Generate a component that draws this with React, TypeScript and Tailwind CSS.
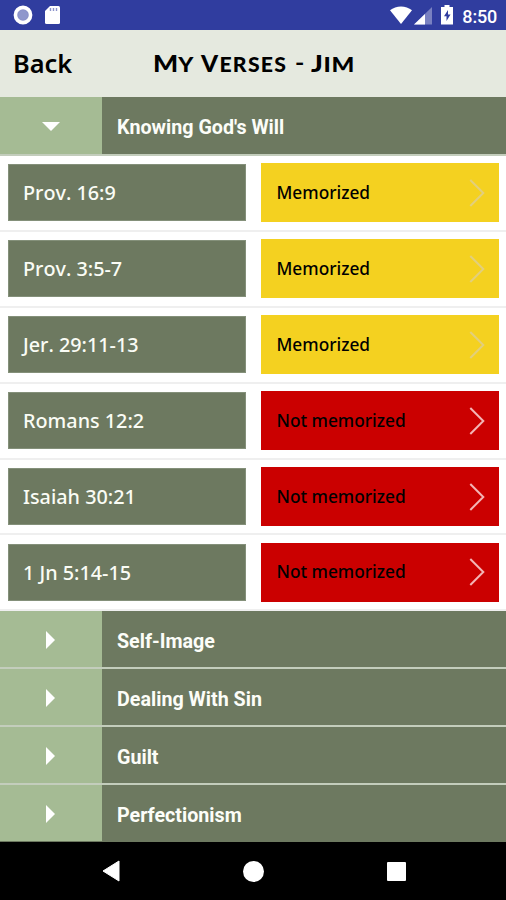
import { useState } from "react";

type Verse = { reference: string; memorized: boolean };

const verses: Verse[] = [
    { reference: "Prov. 16:9", memorized: true },
    { reference: "Prov. 3:5-7", memorized: true },
    { reference: "Jer. 29:11-13", memorized: true },
    { reference: "Romans 12:2", memorized: false },
    { reference: "Isaiah 30:21", memorized: false },
    { reference: "1 Jn 5:14-15", memorized: false },
];

const categories = [
    { name: "Knowing God's Will", verses },
    { name: "Self-Image", verses: [] },
    { name: "Dealing With Sin", verses: [] },
    { name: "Guilt", verses: [] },
    { name: "Perfectionism", verses: [] },
];

const StatusBar = () => (
    <div className="h-[30px] shrink-0 bg-[#303d9f] flex items-center justify-between pl-[13px] pr-[9px] text-white">
        <div className="flex items-center gap-[11px]">
            <svg width="20" height="20" viewBox="0 0 20 20">
                <circle cx="10" cy="10" r="7.6" fill="#8b93ca" stroke="#fff" strokeWidth="3.6" />
                <circle cx="10" cy="10" r="4.5" fill="#8f97cc" />
            </svg>
            <svg width="17" height="20" viewBox="0 0 17 20">
                <path d="M6 1h8.500a1.500 1.500 0 0 1 1.500 1.500v15a1.500 1.500 0 0 1-1.500 1.500h-12A1.500 1.500 0 0 1 1 17.500V6z" fill="#fff" />
                <path d="M6.500 3v3M9.500 3v3M12.500 3v3" stroke="#8d94cb" strokeWidth="1.400" />
            </svg>
        </div>
        <div className="flex items-center">
            <svg width="22" height="18" viewBox="0 0 22 18">
                <path d="M0 4.200C6-.9 16-.9 22 4.200L11 18z" fill="#fff" />
            </svg>
            <svg className="ml-[2px] mt-px" width="18" height="18" viewBox="0 0 18 18">
                <path d="M0 17.500L18 0v17.500z" fill="#7981c1" />
                <path d="M0 17.500L11 7v10.500z" fill="#fff" />
            </svg>
            <svg className="ml-[9px]" width="12" height="20" viewBox="0 0 12 20">
                <path d="M3.500 0h5v2H12v17.500H0V2h3.500z" fill="#fff" />
                <path d="M7 5L3 11.300h2.500V16l4-6.500H7z" fill="#303d9f" />
            </svg>
            <span className="ml-[9px] mt-[3px] font-[Roboto] font-medium text-[18px] leading-none tracking-[-0.2px]">8:50</span>
        </div>
    </div>
);

const Header = () => (
    <div className="h-[67px] shrink-0 bg-[#e5e9df] flex items-center pl-[13px] text-black">
        <button className="w-[140px] pt-px text-left font-['Noto_Sans'] font-semibold text-[25.4px] leading-none">Back</button>
        <h1 className="flex items-baseline font-[Lato] font-black uppercase text-[20px] leading-none">
            <span className="w-[48px]">
                <span className="inline-block origin-left scale-x-[1.15] first-letter:text-[23px]">My</span>
            </span>
            <span className="w-[94px]">
                <span className="inline-block origin-left scale-x-[1.06] tracking-[1.2px] first-letter:text-[23px]">Verses</span>
            </span>
            <span className="w-[16px]">
                <span className="inline-block origin-left scale-x-[1.25] -translate-y-[2px]">-</span>
            </span>
            <span className="inline-block origin-left scale-x-[1.2] tracking-[0.5px] first-letter:text-[23px]">Jim</span>
        </h1>
    </div>
);

const VerseRow = ({ verse }: { verse: Verse }) => (
    <div className="h-[75.9px] bg-white border-b-2 border-[#efefef] grid grid-cols-2 items-center font-['Noto_Sans'] font-medium">
        <div className="ml-[8px] mr-[7px] h-[57px] bg-[#6d7960] border border-[#84907a] px-[14px] flex items-center text-[19.8px] [font-kerning:none] text-[#fafcf5]">
            {verse.reference}
        </div>
        <button
            className={`ml-[8px] mr-[7px] h-[59px] pl-[15.5px] pr-[14px] flex items-center justify-between text-[17.3px] text-black ${verse.memorized ? "bg-[#f4d120]" : "bg-[#cb0000]"}`}
        >
            {verse.memorized ? "Memorized" : "Not memorized"}
            <svg width="16" height="28" viewBox="0 0 16 28" fill="none" className={verse.memorized ? "stroke-[#e2cf7c]" : "stroke-[#f3b5b5]"}>
                <path d="M1.300 1L14.300 14L1.300 27" strokeWidth="2" />
            </svg>
        </button>
    </div>
);

const App = () => {
    const [openCategory, setOpenCategory] = useState("Knowing God's Will");

    return (
        <div className="w-full h-screen flex flex-col overflow-hidden bg-white">
            <StatusBar />
            <Header />

            <div className="flex-1 overflow-hidden">
                {categories.map((category, index) => {
                    const open = category.name === openCategory;
                    const last = index === categories.length - 1;
                    return (
                        <div key={category.name}>
                            {/* category bar */}
                            <button
                                className={`w-full flex items-stretch border-b-2 text-left ${last ? "border-[#6d7960]" : "border-[#c3cdbc]"} ${open ? "h-[59px]" : "h-[58px]"}`}
                                onClick={() => setOpenCategory(open ? "" : category.name)}
                            >
                                <span className="w-[102px] bg-[#a5bb94] pr-px pt-px flex items-center justify-center">
                                    {open ? (
                                        <svg width="18" height="9" viewBox="0 0 18 9">
                                            <path d="M0 0h18L9 9z" fill="#fff" />
                                        </svg>
                                    ) : (
                                        <svg width="9" height="18" viewBox="0 0 9 18">
                                            <path d="M0 0l9 9l-9 9z" fill="#fff" />
                                        </svg>
                                    )}
                                </span>
                                <span className="flex-1 bg-[#6d7960] pl-[15px] pt-[4px] flex items-center font-[Roboto] font-bold text-[19.7px] text-[#fcfdf8]">
                                    {category.name}
                                </span>
                            </button>
                            {open && category.verses.map((verse) => <VerseRow key={verse.reference} verse={verse} />)}
                        </div>
                    );
                })}
            </div>

            {/* android navigation */}
            <div className="h-[58px] shrink-0 bg-black flex items-center justify-between pl-[102px] pr-[100px]">
                <svg width="18" height="22" viewBox="0 0 18 22">
                    <path d="M17 1v20L1 11z" fill="#fff" stroke="#fff" strokeLinejoin="round" />
                </svg>
                <span className="size-[21px] rounded-full bg-white" />
                <span className="size-[19px] rounded-[1px] bg-white" />
            </div>
        </div>
    );
};

export default App;
